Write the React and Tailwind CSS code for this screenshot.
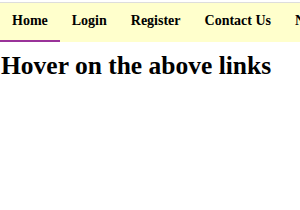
import React from 'react';

const links = ['Home', 'Login', 'Register', 'Contact Us', 'News'];

export default function App() {
  return (
    <div className="bg-white h-[210px] overflow-hidden" style={{ fontFamily: '"Liberation Serif", serif' }}>
      <div className="h-[2px]" />
      <ul className="flex whitespace-nowrap bg-[#ffffcc] border-t border-[#dddddd] overflow-hidden">
        {links.map((name, i) => (
          <li key={name} className="shrink-0">
            <a
              href="#"
              className={
                'block px-3 pt-[10px] pb-[11px] text-[14px] leading-4 font-bold text-black border-b-2 ' +
                (i === 0 ? 'border-[#993399]' : 'border-transparent')
              }
            >
              {name}
            </a>
          </li>
        ))}
      </ul>
      <h1 className="text-[25.5px] font-bold text-black mt-[8px] pl-[1px] leading-tight">
        Hover on the above links
      </h1>
    </div>
  );
}
